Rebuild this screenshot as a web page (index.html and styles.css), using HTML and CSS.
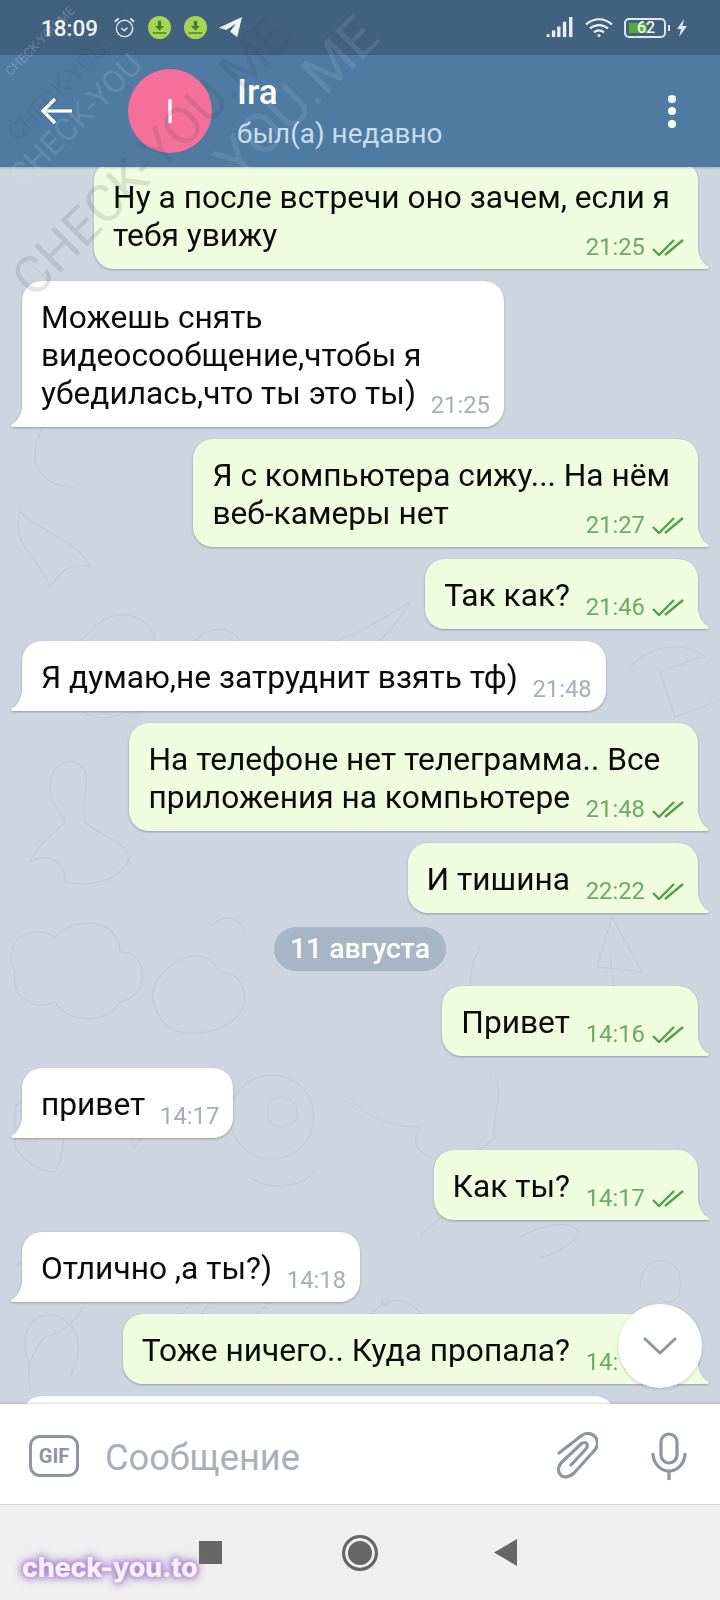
FILE: index.html
```html
<!DOCTYPE html>
<html lang="ru">

<head>
  <meta charset="UTF-8">
  <meta name="viewport" content="width=device-width, initial-scale=1.0">
  <title>Ira</title>

  <link rel="stylesheet" href="styles.css">
</head>

<body>
  <div class="phone">
    <div class="status-bar">
      <div class="status-left">
        <span class="clock">18:09</span>
        <svg class="ic-alarm" viewBox="0 0 24 24" fill="none" stroke="#e8eef4" stroke-width="1.5">
          <circle cx="12" cy="13" r="8.5" />
          <path d="M8.5 12.5l3.2 3 3.5-3.5" />
          <path d="M2 6l4-3.5M22 6l-4-3.5" stroke-width="2" />
        </svg>
        <svg class="ic-dl" viewBox="0 0 24 24">
          <circle cx="12" cy="12" r="12" fill="#a9d44f" />
          <path d="M10.2 5h3.6v5.5h3L12 15.200l-4.800-4.700h3z" fill="#3d7f33" />
          <rect x="5" y="17" width="14" height="1.500" fill="#3d7f33" />
        </svg>
        <svg class="ic-dl" viewBox="0 0 24 24">
          <circle cx="12" cy="12" r="12" fill="#a9d44f" />
          <path d="M10.2 5h3.6v5.500h3L12 15.200l-4.800-4.700h3z" fill="#3d7f33" />
          <rect x="5" y="17" width="14" height="1.500" fill="#3d7f33" />
        </svg>
        <svg class="ic-plane" viewBox="0 0 24 24">
          <path d="M24 1L19 22 11.500 16.500 17.500 8 7.500 14.500 0 12.200z" fill="#eef2f6" />
        </svg>
      </div>
      <div class="status-right">
        <svg class="ic-signal" viewBox="0 0 28 22" fill="#e8eef4">
          <rect x="0" y="18" width="3" height="3" />
          <rect x="5.500" y="14" width="3.500" height="7" />
          <rect x="11" y="10" width="3.500" height="11" />
          <rect x="17" y="5" width="3.500" height="16" />
          <rect x="23.500" y="0" width="3.500" height="21" />
        </svg>
        <svg class="ic-wifi" viewBox="0 0 28 20" fill="none" stroke="#eef2f6" stroke-width="2.200">
          <path d="M1 6.500c8-7 18-7 26 0" />
          <path d="M5 10.500c5.500-4.500 12.500-4.500 18 0" />
          <path d="M9 14.300c3-2.400 7-2.400 10 0" />
          <circle cx="14" cy="17.500" r="1.500" fill="#eef2f6" stroke="none" />
        </svg>
        <div class="battery">
          <div class="battery-body"><span class="battery-fill"></span><span class="battery-num">62</span></div>
          <span class="battery-tip"></span>
        </div>
        <svg class="ic-bolt" viewBox="0 0 12 18">
          <path d="M8 0L1 10h4l-2 8 8-11H6.500z" fill="#dfe6ec" />
        </svg>
      </div>
    </div>

    <header class="top-bar">
      <svg class="ic-back" viewBox="0 0 32 28" fill="none" stroke="#fff" stroke-width="3.200">
        <path d="M32 14H3" />
        <path d="M15 2L3 14l12 12" />
      </svg>
      <div class="avatar">I</div>
      <div class="peer">
        <div class="peer-name">Ira</div>
        <div class="peer-seen">был(а) недавно</div>
      </div>
      <div class="menu-dots"><i></i><i></i><i></i></div>
    </header>

    <main class="chat">
      <svg class="doodles" viewBox="0 0 720 1237" fill="none" stroke="#c0cbd8" stroke-width="1.200">
        <path d="M110 220c-25-40-70-10-60 30-25 30-20 70 25 70" />
        <path d="M300 190l10 20 22-2-14 17 10 22-22-8-16 15 2-22" />
        <path d="M20 345c20 20 60 30 70 55-20-5-30 5-40 20-10-30-40-40-30-75z" />
        <path d="M85 470c30-40 75-20 70 15 25 20 0 70-30 60-35 20-70-15-50-40-10-10 0-30 10-35z" />
        <circle cx="120" cy="505" r="18" />
        <path d="M190 480c20-30 60-20 50 15-15 15-5 30-30 35-20-10-35-30-20-50z" />
        <path d="M290 480c40 5 80-20 120-45-20 35-50 55-70 75-20-5-40-10-50-30z" />
        <path d="M50 620c0-25 25-35 35-15 5 15-5 30 0 50 15 15 35 15 45 35-10 25-40 30-65 25 0-20-15-30-35-20 5-15 30-35 35-40-5-10-15-20-15-35z" />
        <path d="M700 490l-40 15 15 45 40-15" />
        <path d="M15 805c-15-30 15-50 40-35 25-25 65-15 65 15 30 0 30 45 0 50-15 25-55 20-65 0-20 10-45-5-40-30z" />
        <path d="M160 810c25-30 50-25 60-5 25 0 30 30 20 40-15 25-70 30-80 5-10-15-10-30 0-40z" />
        <path d="M210 760c15-15 30-10 35 5" />
        <path d="M480 780c-10 20-15 40 0 60" />
        <path d="M612 750l30 55-45-5zM610 790l4 30" />
        <path d="M130 920l14 16 20-4-10 18 12 17-20-2-12 16-6-20-20-6 18-10z" />
        <circle cx="272" cy="950" r="42" />
        <circle cx="282" cy="945" r="15" />
        <path d="M250 1010c20 15 50 10 65-5" />
        <path d="M15 940c20-20 30-25 40-25 10 20 15 60 0 90-15 0-30-10-40-25z" />
        <circle cx="30" cy="965" r="10" />
        <path d="M350 930c15 20 40 30 70 30-10 15-5 25 20 35 20 0 40-10 55-25-5-20 10-40 0-60" />
        <path d="M450 1000c5 30 25 50 60 50" />
        <path d="M160 1180c20-45 90-100 150-105-10 35-50 80-90 90-20 5-40 10-60 15zM200 1150c10-20 40-45 70-60" />
        <path d="M15 1100c25-20 60-20 75 5 5 30-20 60-45 65-10 10-20 30-15 50" />
        <path d="M370 1150c15-25 45-20 55 5 5 25-25 40-45 25-10-10-15-20-10-30z" />
        <circle cx="385" cy="1135" r="3" />
        <path d="M520 1070c20-10 45-20 60-5-10 15-30 25-40 25" />
        <path d="M640 1120c0-35 45-35 40 0 0 15-15 20-20 10" />
        <path d="M420 1070c10-15 35-25 50-40" />
        <path d="M30 1200c-15-35 5-60 30-50 25 15 20 40 10 60" />
        <path d="M630 500c25-25 55-25 75-10" />
        <path d="M20 90c25 15 55 50 60 90" />
        <path d="M600 560c30-10 55 10 60 40-15 25-45 25-60 10-10-20-10-40 0-50z" />
      </svg>

      <div class="messages">
        <div class="msg out">
          <div class="msg-text">Ну а после встречи оно зачем, если я<br>тебя увижу</div>
          <div class="meta">21:25<svg class="ticks" viewBox="0 0 32 17"><path d="M1 10l6 6L22 1M13 16L31 1" /></svg></div>
        </div>
        <div class="msg in">
          <div class="msg-text">Можешь снять<br>видеосообщение,чтобы я<br>убедилась,что ты это ты)<i class="spacer"></i></div>
          <div class="meta">21:25</div>
        </div>
        <div class="msg out">
          <div class="msg-text">Я с компьютера сижу... На нём<br>веб-камеры нет</div>
          <div class="meta">21:27<svg class="ticks" viewBox="0 0 32 17"><path d="M1 10l6 6L22 1M13 16L31 1" /></svg></div>
        </div>
        <div class="msg out">
          <div class="msg-text">Так как?<i class="spacer"></i></div>
          <div class="meta">21:46<svg class="ticks" viewBox="0 0 32 17"><path d="M1 10l6 6L22 1M13 16L31 1" /></svg></div>
        </div>
        <div class="msg in">
          <div class="msg-text">Я думаю,не затруднит взять тф)<i class="spacer"></i></div>
          <div class="meta">21:48</div>
        </div>
        <div class="msg out">
          <div class="msg-text">На телефоне нет телеграмма.. Все<br>приложения на компьютере<i class="spacer"></i></div>
          <div class="meta">21:48<svg class="ticks" viewBox="0 0 32 17"><path d="M1 10l6 6L22 1M13 16L31 1" /></svg></div>
        </div>
        <div class="msg out">
          <div class="msg-text">И тишина<i class="spacer"></i></div>
          <div class="meta">22:22<svg class="ticks" viewBox="0 0 32 17"><path d="M1 10l6 6L22 1M13 16L31 1" /></svg></div>
        </div>
        <div class="date-chip">11 августа</div>
        <div class="msg out">
          <div class="msg-text">Привет<i class="spacer"></i></div>
          <div class="meta">14:16<svg class="ticks" viewBox="0 0 32 17"><path d="M1 10l6 6L22 1M13 16L31 1" /></svg></div>
        </div>
        <div class="msg in">
          <div class="msg-text">привет<i class="spacer"></i></div>
          <div class="meta">14:17</div>
        </div>
        <div class="msg out">
          <div class="msg-text">Как ты?<i class="spacer"></i></div>
          <div class="meta">14:17<svg class="ticks" viewBox="0 0 32 17"><path d="M1 10l6 6L22 1M13 16L31 1" /></svg></div>
        </div>
        <div class="msg in">
          <div class="msg-text">Отлично ,а ты?)<i class="spacer"></i></div>
          <div class="meta">14:18</div>
        </div>
        <div class="msg out">
          <div class="msg-text">Тоже ничего.. Куда пропала?<i class="spacer"></i></div>
          <div class="meta">14:18<svg class="ticks" viewBox="0 0 32 17"><path d="M1 10l6 6L22 1M13 16L31 1" /></svg></div>
        </div>
        <div class="msg in msg-cut">
          <div class="msg-text">&nbsp;</div>
        </div>
      </div>

      <div class="fab">
        <svg viewBox="0 0 36 20" fill="none" stroke="#8e979f" stroke-width="3">
          <path d="M2 2l16 15L34 2" />
        </svg>
      </div>
    </main>

    <div class="composer">
      <div class="gif-btn">GIF</div>
      <div class="placeholder">Сообщение</div>
      <svg class="ic-clip" viewBox="0 0 42 48" fill="none" stroke="#8e979f" stroke-width="3.200" stroke-linecap="round">
        <path d="M3 21L25 4c5-4 12-3 15 2 3 5 1 10-3 14L18 41c-4 4-11 6-14 1-3-4-1-9 2-12l19-18c2-2 5-2 6 0 1 2 0 4-2 6L15 33" />
      </svg>
      <svg class="ic-mic" viewBox="0 0 36 48" fill="none" stroke="#8e979f" stroke-width="3.200">
        <rect x="10" y="2" width="16" height="29" rx="8" />
        <path d="M2 21c0 10 7 18 16 18s16-8 16-18" />
        <path d="M18 39v9" />
      </svg>
    </div>

    <nav class="nav-bar">
      <span class="nav-square"></span>
      <span class="nav-circle"></span>
      <svg class="nav-back" viewBox="0 0 24 28"><path d="M24 0v28L0 14z" fill="#666" /></svg>
      <span class="brand">check-you.to</span>
    </nav>

    <div class="wm wm-big">CHECK-YOU.ME</div>
    <div class="wm wm-mid">CHECK-YOU.ME</div>
    <div class="wm wm-small">CHECK-YOU.ME</div>
    <div class="wm wm-light">CHECK-YOU</div>
    <div class="wm wm-side">YOU.ME</div>
  </div>
</body>

</html>
```

FILE: styles.css
```css
* {
  box-sizing: border-box;
}

html,
body {
  margin: 0;
  padding: 0;
}

body {
  font-family: "Roboto", "Liberation Sans", sans-serif;
  background: #ccd5e0;
}

.phone {
  position: relative;
  display: flex;
  flex-direction: column;
  width: 720px;
  height: 1600px;
  overflow: hidden;
}

/* status bar */
.status-bar {
  display: flex;
  justify-content: space-between;
  align-items: center;
  flex: none;
  height: 55px;
  padding: 0 32px 0 41px;
  background: #41617f;
  color: #f0f4f8;
}

.status-left,
.status-right {
  display: flex;
  align-items: center;
}

.clock {
  margin-right: 15px;
  font-size: 22.500px;
  font-weight: 500;
}

.ic-alarm {
  width: 23px;
  height: 23px;
  margin-right: 12px;
}

.ic-dl {
  width: 23px;
  height: 23px;
  margin-right: 13px;
}

.ic-plane {
  width: 25px;
  height: 23px;
  margin-left: -2px;
}

.ic-signal {
  width: 28px;
  height: 21px;
  margin-right: 11px;
}

.ic-wifi {
  width: 28px;
  height: 20px;
  margin-right: 11px;
}

.battery {
  display: flex;
  align-items: center;
  margin-right: 6px;
}

.battery-body {
  position: relative;
  width: 42px;
  height: 20px;
  padding: 3px;
  border: 2px solid #dfe6ec;
  border-radius: 5px;
}

.battery-fill {
  display: block;
  width: 18px;
  height: 100%;
  background: #55ad37;
}

.battery-num {
  position: absolute;
  left: 11px;
  top: -2px;
  font-size: 16px;
  line-height: 20px;
  font-weight: 500;
  color: #f2f7ef;
}

.battery-tip {
  width: 2px;
  height: 6px;
  margin-left: 2px;
  background: #dfe6ec;
}

.ic-bolt {
  width: 12px;
  height: 18px;
}

/* header */
.top-bar {
  display: flex;
  align-items: center;
  flex: none;
  height: 112px;
  padding: 0 0 0 40px;
  background: #4f7ba3;
  box-shadow: 0 1px 2px rgba(40, 60, 80, 0.25);
  z-index: 2;
}

.ic-back {
  width: 32px;
  height: 28px;
  margin-right: 56px;
}

.avatar {
  display: flex;
  align-items: center;
  justify-content: center;
  width: 84px;
  height: 84px;
  margin-right: 25px;
  border-radius: 50%;
  background: #f4709a;
  color: #fff;
  font-size: 33px;
}

.peer {
  flex: 1;
}

.peer-name {
  font-size: 35px;
  line-height: 40px;
  font-weight: 500;
  color: #fff;
}

.peer-seen {
  margin-top: 6px;
  font-size: 27.900px;
  line-height: 30px;
  color: #c7dcef;
}

.menu-dots {
  display: flex;
  flex-direction: column;
  gap: 4.500px;
  margin-right: 44px;
}

.menu-dots i {
  width: 8px;
  height: 8px;
  border-radius: 50%;
  background: #fff;
}

/* chat */
.chat {
  position: relative;
  flex: 1;
  overflow: hidden;
  background: #ccd5e0;
}

.doodles {
  position: absolute;
  left: 0;
  top: 0;
  width: 720px;
  height: 1237px;
}

.messages {
  position: relative;
  display: flex;
  flex-direction: column;
  gap: 12px;
  margin-top: -6px;
  padding: 0 22px;
}

.msg {
  position: relative;
  display: grid;
  width: max-content;
  padding: 18px 28px 14px 19px;
  border-radius: 20px;
  filter: drop-shadow(0 1px 1px rgba(70, 90, 100, 0.45));
}

.msg::after {
  content: "";
  position: absolute;
  bottom: 0;
  width: 12px;
  height: 26px;
}

.msg.out {
  align-self: flex-end;
  background: #effcdd;
  border-bottom-right-radius: 0;
}

.msg.out::after {
  right: -11px;
  background: #effcdd;
  clip-path: path("M0 0C1 12 5 21 12 24Q12 26 9 26H0Z");
}

.msg.in {
  align-self: flex-start;
  background: #fff;
  border-bottom-left-radius: 0;
}

.msg.in::after {
  left: -11px;
  background: #fff;
  clip-path: path("M12 0C11 12 7 21 0 24Q0 26 3 26H12Z");
}

.msg-cut {
  width: 593px;
}

.msg-text,
.meta {
  grid-area: 1 / 1;
}

.msg-text {
  font-size: 31.700px;
  line-height: 38px;
  color: #0b0b0b;
  white-space: nowrap;
}

.spacer {
  display: inline-block;
}

.out .spacer {
  width: 100px;
}

.in .spacer {
  width: 60px;
}

.meta {
  display: flex;
  align-items: center;
  justify-self: end;
  align-self: end;
  margin: 0 -14px -4px 0;
  font-size: 23.800px;
  line-height: 24px;
}

.out .meta {
  color: #6dab65;
}

.in .meta {
  color: #a6aeb6;
}

.ticks {
  width: 32px;
  height: 17px;
  margin-left: 7px;
  fill: none;
  stroke: #55a04f;
  stroke-width: 2.400;
}

.date-chip {
  align-self: center;
  margin: 2px 0 3px;
  padding: 0 16px;
  height: 44px;
  border-radius: 22px;
  background: #a7b5c4;
  color: #fff;
  font-size: 28.300px;
  font-weight: 500;
  line-height: 44px;
}

.fab {
  position: absolute;
  left: 618px;
  top: 1137px;
  display: flex;
  align-items: center;
  justify-content: center;
  width: 84px;
  height: 84px;
  border-radius: 50%;
  background: #fff;
  box-shadow: 0 1px 3px rgba(60, 80, 90, 0.25);
}

.fab svg {
  width: 36px;
  height: 20px;
}

/* input */
.composer {
  display: flex;
  align-items: center;
  flex: none;
  height: 101px;
  padding: 4px 33px 0 29px;
  background: #fff;
  box-shadow: 0 -1px 2px rgba(60, 70, 80, 0.2);
  border-bottom: 1px solid #d4d4d4;
  z-index: 2;
}

.gif-btn {
  width: 50px;
  height: 42px;
  margin-right: 26px;
  border: 3px solid #8e979f;
  border-radius: 11px;
  color: #8e979f;
  font-size: 20px;
  font-weight: 700;
  line-height: 36px;
  text-align: center;
}

.placeholder {
  flex: 1;
  padding-top: 2px;
  font-size: 36.200px;
  color: #a9b1b8;
}

.ic-clip {
  width: 42px;
  height: 48px;
  margin-right: 53px;
}

.ic-mic {
  width: 36px;
  height: 48px;
}

.nav-bar {
  position: relative;
  display: flex;
  align-items: center;
  flex: none;
  height: 95px;
  padding: 0 0 0 199px;
  background: #efefef;
}

.nav-square {
  width: 23px;
  height: 23px;
  background: #666;
}

.nav-circle {
  width: 36px;
  height: 36px;
  margin-left: 120px;
  border: 3px solid #666;
  border-radius: 50%;
  background: #666;
  box-shadow: inset 0 0 0 3px #efefef;
}

.nav-back {
  width: 23px;
  height: 27px;
  margin-left: 116px;
}

.brand {
  position: absolute;
  left: 22px;
  top: 47px;
  font-family: "Inter", "Roboto", sans-serif;
  font-size: 27px;
  font-weight: 800;
  line-height: 32px;
  letter-spacing: -0.300px;
  color: #f6f0fb;
  text-shadow: 0 0 5px #a77ccd, 0 0 9px #a77ccd, 0 0 12px #b990d8;
}

/* watermark */
.wm {
  position: absolute;
  z-index: 3;
  font-family: "Roboto", sans-serif;
  font-weight: 400;
  line-height: 1;
  white-space: nowrap;
  color: rgba(55, 65, 80, 0.14);
  transform: rotate(-45deg);
  transform-origin: left bottom;
  pointer-events: none;
}

.wm-big {
  left: 40px;
  top: 254px;
  font-size: 52px;
}

.wm-mid {
  left: 20px;
  top: 121px;
  font-size: 24px;
}

.wm-small {
  left: 12px;
  top: 65px;
  font-size: 13px;
  color: rgba(235, 240, 245, 0.22);
}

.wm-light {
  left: 26px;
  top: 160px;
  font-size: 32px;
  color: rgba(235, 240, 245, 0.14);
}

.wm-side {
  left: 245px;
  top: 134px;
  font-size: 56px;
  color: rgba(235, 240, 245, 0.1);
}
```
